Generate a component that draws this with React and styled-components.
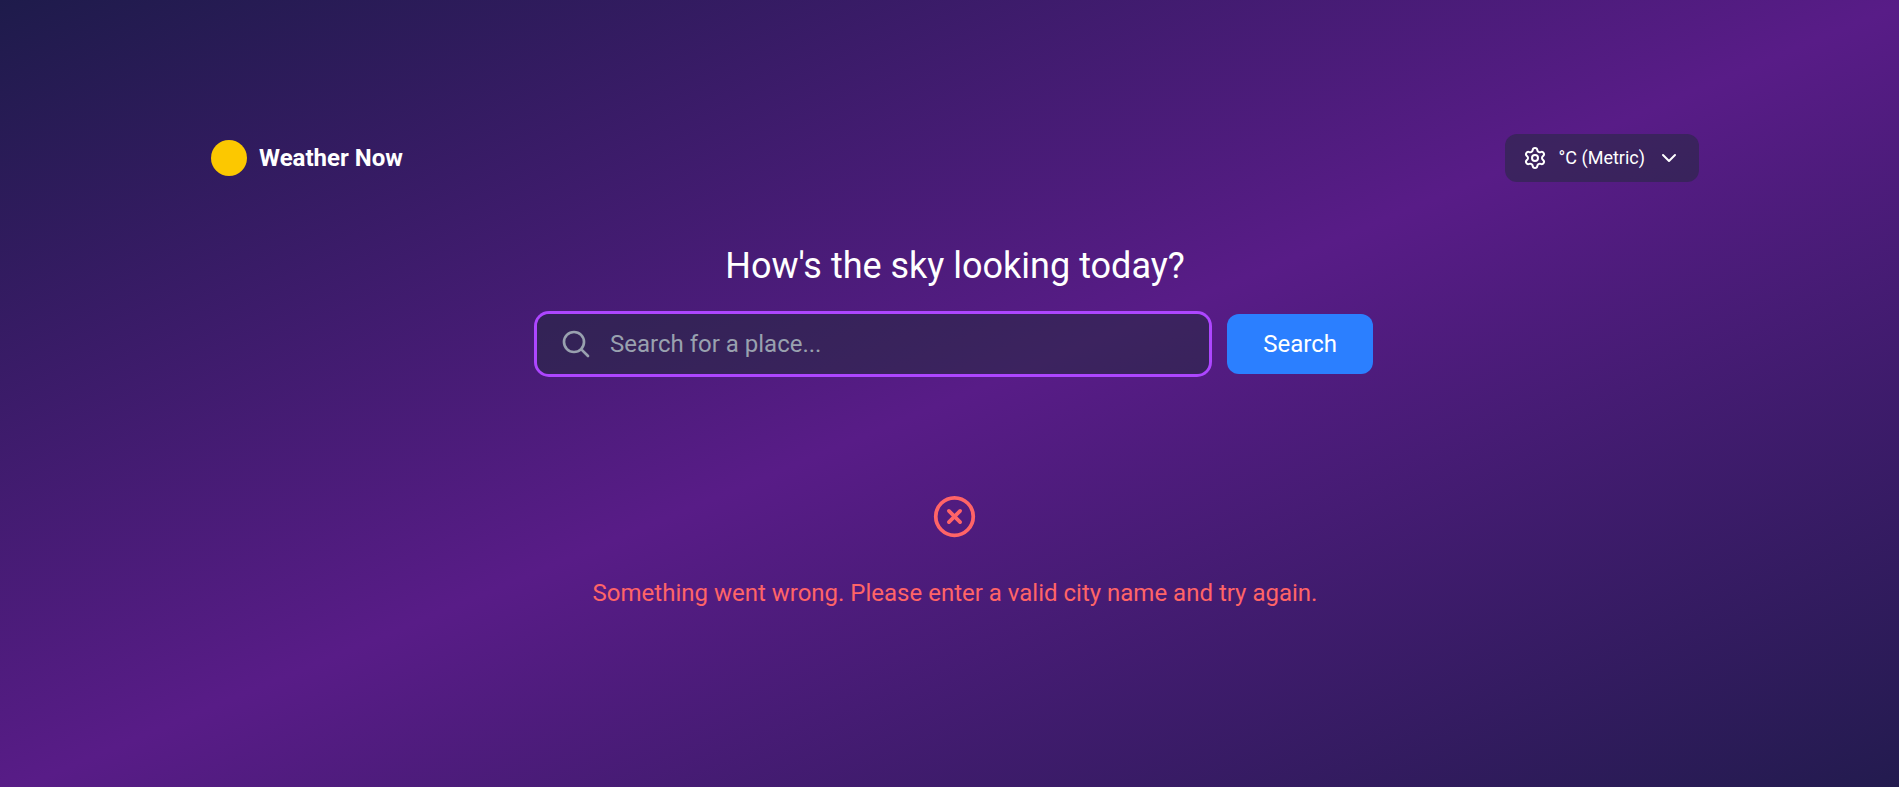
import React from "react";
import styled, { createGlobalStyle } from "styled-components";
import { Settings, ChevronDown, CircleX } from "lucide-react";

const GlobalStyle = createGlobalStyle`
  *, *::before, *::after { box-sizing: border-box; }
  body {
    margin: 0;
    font-family: Roboto, "Liberation Sans", sans-serif;
    color: #ffffff;
  }
`;

const Page = styled.div`
  min-height: 100vh;
  padding: 134px 0 48px 11px;
  background: linear-gradient(to bottom right, #1e1b4b, #581c87, #221b4e) 0 0 / calc(100% + 12px) calc(100% + 8px) no-repeat;
`;

const Container = styled.div`
  width: 100%;
  max-width: 1488px;
  margin: 0 auto;
`;

const Header = styled.header`
  display: flex;
  align-items: center;
  justify-content: space-between;
`;

const Brand = styled.div`
  display: flex;
  align-items: center;
  gap: 12px;
  font-size: 24px;
  line-height: 36px;
  font-weight: 700;
`;

const Sun = styled.span`
  width: 36px;
  height: 36px;
  border-radius: 50%;
  background: #fcc800;
`;

const UnitPicker = styled.label`
  display: flex;
  align-items: center;
  gap: 12px;
  height: 48px;
  padding: 0 18px;
  border-radius: 12px;
  background: rgba(31, 41, 55, 0.5);
`;

const UnitSelect = styled.select`
  appearance: none;
  field-sizing: content;
  border: 0;
  padding: 0;
  outline: none;
  background: transparent;
  color: inherit;
  font-family: inherit;
  font-size: 18px;
  line-height: 24px;

  option { color: #1f2937; }
`;

const Main = styled.main`
  display: flex;
  flex-direction: column;
  align-items: center;
  padding-top: 60px;
`;

const Title = styled.h1`
  margin: 0;
  font-size: 36px;
  line-height: 48px;
  font-weight: 400;
  text-align: center;
`;

const SearchForm = styled.form`
  display: flex;
  gap: 18px;
  width: 100%;
  max-width: 836px;
  margin-top: 24px;
`;

const SearchField = styled.label`
  flex: 1;
  display: flex;
  align-items: center;
  gap: 18px;
  min-width: 0;
  height: 60px;
  padding: 0 23px;
  border-radius: 12px;
  background: rgba(31, 41, 55, 0.5);
  box-shadow: 0 0 0 3px #ad46ff;
  color: #99a1af;
`;

const SearchInput = styled.input`
  flex: 1;
  min-width: 0;
  border: 0;
  padding: 0;
  outline: none;
  background: transparent;
  color: #ffffff;
  font-family: inherit;
  font-size: 24px;
  line-height: 36px;

  &::placeholder { color: #99a1af; }
`;

const SearchButton = styled.button`
  height: 60px;
  padding: 0 36px;
  border: 0;
  border-radius: 12px;
  background: #2b7fff;
  color: #ffffff;
  font-family: inherit;
  font-size: 24px;
  cursor: pointer;
`;

const ErrorNotice = styled.div`
  display: flex;
  flex-direction: column;
  align-items: center;
  gap: 36px;
  margin-top: 120px;
  color: #ff6467;
`;

const ErrorText = styled.p`
  margin: 0;
  font-size: 24px;
  line-height: 36px;
  text-align: center;
`;

function MagnifierIcon() {
  return (
    <svg
      width="32"
      height="32"
      viewBox="0 0 24 24"
      fill="none"
      stroke="currentColor"
      strokeWidth="2"
      strokeLinecap="round"
      strokeLinejoin="round"
      aria-hidden="true"
    >
      <path d="m21 21-5.197-5.197m0 0A7.5 7.5 0 1 0 5.196 5.196a7.5 7.5 0 0 0 10.607 10.607Z" />
    </svg>
  );
}

export default function App() {
  return (
    <>
      <GlobalStyle />
      <Page>
        <Container>
          <Header>
            <Brand>
              <Sun />
              <span>Weather Now</span>
            </Brand>
            <UnitPicker>
              <Settings size={24} aria-hidden="true" />
              <UnitSelect aria-label="Units" defaultValue="metric">
                <option value="metric">°C (Metric)</option>
                <option value="imperial">°F (Imperial)</option>
              </UnitSelect>
              <ChevronDown size={24} aria-hidden="true" />
            </UnitPicker>
          </Header>
          <Main>
            <Title>How's the sky looking today?</Title>
            <SearchForm onSubmit={(event) => event.preventDefault()}>
              <SearchField>
                <MagnifierIcon />
                <SearchInput type="text" aria-label="Place" placeholder="Search for a place..." />
              </SearchField>
              <SearchButton type="submit">Search</SearchButton>
            </SearchForm>
            <ErrorNotice role="alert">
              <CircleX size={45} aria-hidden="true" />
              <ErrorText>
                Something went wrong. Please enter a valid city name and try again.
              </ErrorText>
            </ErrorNotice>
          </Main>
        </Container>
      </Page>
    </>
  );
}
